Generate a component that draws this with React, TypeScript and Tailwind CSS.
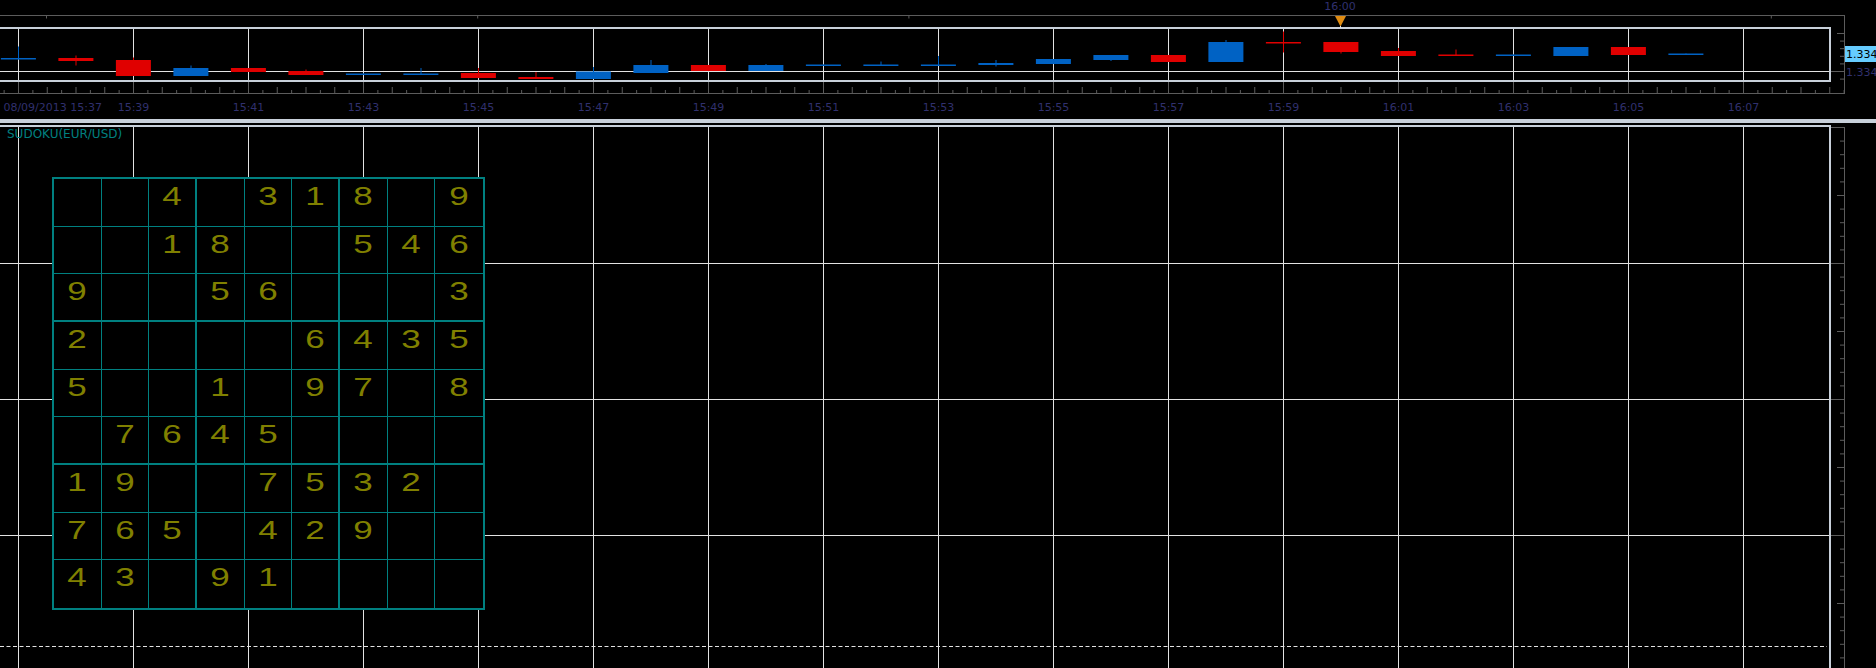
import React from "react";

// chart geometry (px)
const GRID_X0 = 18.5;
const GRID_STEP = 115;
const BAR_STEP = 57.5;
const BAR_HALF = 17.5;
const AXIS_TICK = GRID_STEP / 8;

const GRID_LINE = "#e2e2e2";
const FRAME = "#5c5c5c";
const BORDER = "#c8d0da";
const LABEL = "#30306e";
const BULL = "#0062c4";
const BEAR = "#e00000";

// [blue, bodyTop, bodyBottom, high, low]
const bars: [boolean, number, number, number, number][] = [
  [true, 58, 59.5, 46.5, 59.5],
  [false, 58, 61, 55.5, 65.5],
  [false, 60, 76, 57.5, 76],
  [true, 68, 76, 65.5, 76],
  [false, 68, 72, 68, 72],
  [false, 71, 75, 69.5, 75],
  [true, 73.5, 75, 73.5, 75],
  [true, 73.5, 75, 68, 75],
  [false, 73, 78, 68, 78],
  [false, 77, 79, 72, 79],
  [true, 71.5, 79, 67, 79],
  [true, 65, 73, 60, 73],
  [false, 65, 71, 65, 71],
  [true, 65, 71, 64, 71],
  [true, 64.5, 66, 64.5, 66],
  [true, 64.5, 66, 61.5, 66],
  [true, 64.5, 66, 56, 66],
  [true, 63, 65, 60, 66.5],
  [true, 59, 64, 59, 64],
  [true, 55, 60, 55, 61],
  [false, 55, 62, 55, 62],
  [true, 42, 62, 40, 62],
  [false, 42, 43.5, 31.5, 52.5],
  [false, 42, 52, 42, 53.5],
  [false, 51, 56, 48, 56],
  [false, 54.5, 56, 49.5, 56],
  [true, 54.5, 56, 54.5, 56],
  [true, 47, 56, 47, 56],
  [false, 47, 55, 47, 55],
  [true, 53.5, 55, 53.5, 55],
];

const times = [
  "15:39", "15:41", "15:43", "15:45", "15:47", "15:49", "15:51", "15:53",
  "15:55", "15:57", "15:59", "16:01", "16:03", "16:05", "16:07",
];

const gridXs = Array.from({ length: 16 }, (_, k) => GRID_X0 + k * GRID_STEP);

const board = [
  "..4.318.9",
  "..18..546",
  "9..56...3",
  "2....6435",
  "5..1.97.8",
  ".7645....",
  "19..7532.",
  "765.429..",
  "43.91....",
];

function PriceChart() {
  return (
    <svg width={1876} height={119} className="block shrink-0 text-[11px] font-['DejaVu_Sans',sans-serif]">
      <defs>
        <clipPath id="plot">
          <rect x={0} y={29} width={1829} height={51} />
        </clipPath>
      </defs>

      {/* period marker */}
      <text x={1340} y={10} textAnchor="middle" fill={LABEL}>16:00</text>
      <line x1={0} y1={15.5} x2={1844} y2={15.5} stroke={FRAME} />
      {[0, 1, 2, 4].map((k) => (
        <line key={k} x1={46.5 + k * 431.2} y1={15} x2={46.5 + k * 431.2} y2={18.5} stroke={FRAME} />
      ))}
      <line x1={1844.5} y1={15} x2={1844.5} y2={94} stroke={FRAME} />

      {/* plot area */}
      {gridXs.map((x) => (
        <g key={x}>
          <line x1={x} y1={29} x2={x} y2={80} stroke={GRID_LINE} />
          <line x1={x} y1={82} x2={x} y2={93} stroke={FRAME} />
        </g>
      ))}
      <line x1={0} y1={71.5} x2={1829} y2={71.5} stroke={GRID_LINE} />

      <g clipPath="url(#plot)">
        {bars.map(([blue, top, bottom, high, low], i) => {
          const cx = 18.4 + i * BAR_STEP;
          const color = blue ? BULL : BEAR;
          return (
            <g key={i}>
              <line x1={cx + 0.1} y1={high} x2={cx + 0.1} y2={low} stroke={color} />
              <rect x={cx - BAR_HALF} y={top} width={BAR_HALF * 2} height={Math.max(bottom - top, 1.5)} fill={color} />
            </g>
          );
        })}
      </g>

      <rect x={-5} y={28} width={1835} height={53} fill="none" stroke={BORDER} strokeWidth={2} />

      <polygon points="1335,16 1346,16 1340.5,26.5" fill="#e08c12" />
      <line x1={1340.5} y1={26} x2={1340.5} y2={28} stroke={GRID_LINE} />

      {/* time axis */}
      <line x1={0} y1={93.5} x2={1844} y2={93.5} stroke={FRAME} />
      {Array.from({ length: 129 }, (_, i) => i - 1).map((k) => {
        const x = GRID_X0 + k * AXIS_TICK;
        if (k % 8 === 0) return null;
        return (
          <line key={k} x1={x} y1={k % 2 === 0 ? 87 : 90} x2={x} y2={93} stroke={FRAME} />
        );
      })}
      <text x={102} y={111} textAnchor="end" fill={LABEL}>08/09/2013 15:37</text>
      {times.map((t, i) => (
        <text key={t} x={gridXs[i + 1]} y={111} textAnchor="middle" fill={LABEL}>
          {t}
        </text>
      ))}

      {/* price axis */}
      {Array.from({ length: 7 }, (_, i) => 33.5 + i * 7.6).map((y, i) => (
        <line key={i} x1={i === 5 ? 1831 : i === 0 ? 1837 : 1840} y1={y} x2={1844} y2={y} stroke={FRAME} />
      ))}
      <rect x={1845} y={46} width={40} height={16} fill="#66ccff" />
      <text x={1846} y={58} fill="#000">1.334</text>
      <text x={1846} y={76} fill={LABEL}>1.334</text>
    </svg>
  );
}

function PaneGrid() {
  const ticks = Array.from({ length: 40 }, (_, k) => k);
  return (
    <svg className="absolute inset-0 h-full w-full">
      {gridXs.map((x) => (
        <line key={x} x1={x} y1={2} x2={x} y2={543} stroke={GRID_LINE} />
      ))}
      {[138.5, 274.5, 410.5].map((y) => (
        <line key={y} x1={0} y1={y} x2={1829} y2={y} stroke={GRID_LINE} />
      ))}
      <line x1={0} y1={521.5} x2={1827} y2={521.5} stroke={GRID_LINE} strokeDasharray="4 2.5" />

      <line x1={0} y1={1} x2={1831} y2={1} stroke={BORDER} strokeWidth={2} />
      <line x1={1830} y1={0} x2={1830} y2={543} stroke={BORDER} strokeWidth={2} />

      <line x1={1831} y1={2.5} x2={1844} y2={2.5} stroke={FRAME} />
      <line x1={1844.5} y1={2} x2={1844.5} y2={543} stroke={FRAME} />
      {ticks.map((k) => {
        const y = 2.5 + k * 13.6;
        const x1 = k % 10 === 0 ? 1831 : k % 5 === 0 ? 1837 : 1840;
        return k === 0 ? null : <line key={k} x1={x1} y1={y} x2={1844} y2={y} stroke={FRAME} />;
      })}
    </svg>
  );
}

function Sudoku() {
  return (
    <div className="ml-[52px] mt-[36px] grid h-[433px] w-[433px] grid-cols-9 grid-rows-9 border-2 border-[#008080] bg-black">
      {board.flatMap((row, r) =>
        row.split("").map((ch, c) => {
          const right = c === 8 ? "" : c % 3 === 2 ? "border-r-2" : "border-r";
          const bottom = r === 8 ? "" : r % 3 === 2 ? "border-b-2" : "border-b";
          return (
            <div
              key={`${r}-${c}`}
              className={`flex items-start justify-center border-[#008080] pt-[5px] ${right} ${bottom}`}
            >
              {ch !== "." && (
                <span className="inline-block scale-x-140 font-['Liberation_Sans',sans-serif] text-[25px] leading-[25px] text-[#808000]">
                  {ch}
                </span>
              )}
            </div>
          );
        })
      )}
    </div>
  );
}

export default function App() {
  return (
    <div className="flex h-[668px] w-[1876px] flex-col overflow-hidden bg-black">
      <PriceChart />
      <div className="h-[4px] shrink-0 bg-[#c8d0da]" />
      <div className="h-[2px] shrink-0" />

      <div className="relative flex-1 overflow-hidden">
        <PaneGrid />
        <div className="relative flex flex-col items-start">
          <div className="ml-[7px] mt-[2px] h-[14px] font-['DejaVu_Sans',sans-serif] text-[12px] leading-[14px] text-[#008080]">
            SUDOKU(EUR/USD)
          </div>
          <Sudoku />
        </div>
      </div>
    </div>
  );
}
